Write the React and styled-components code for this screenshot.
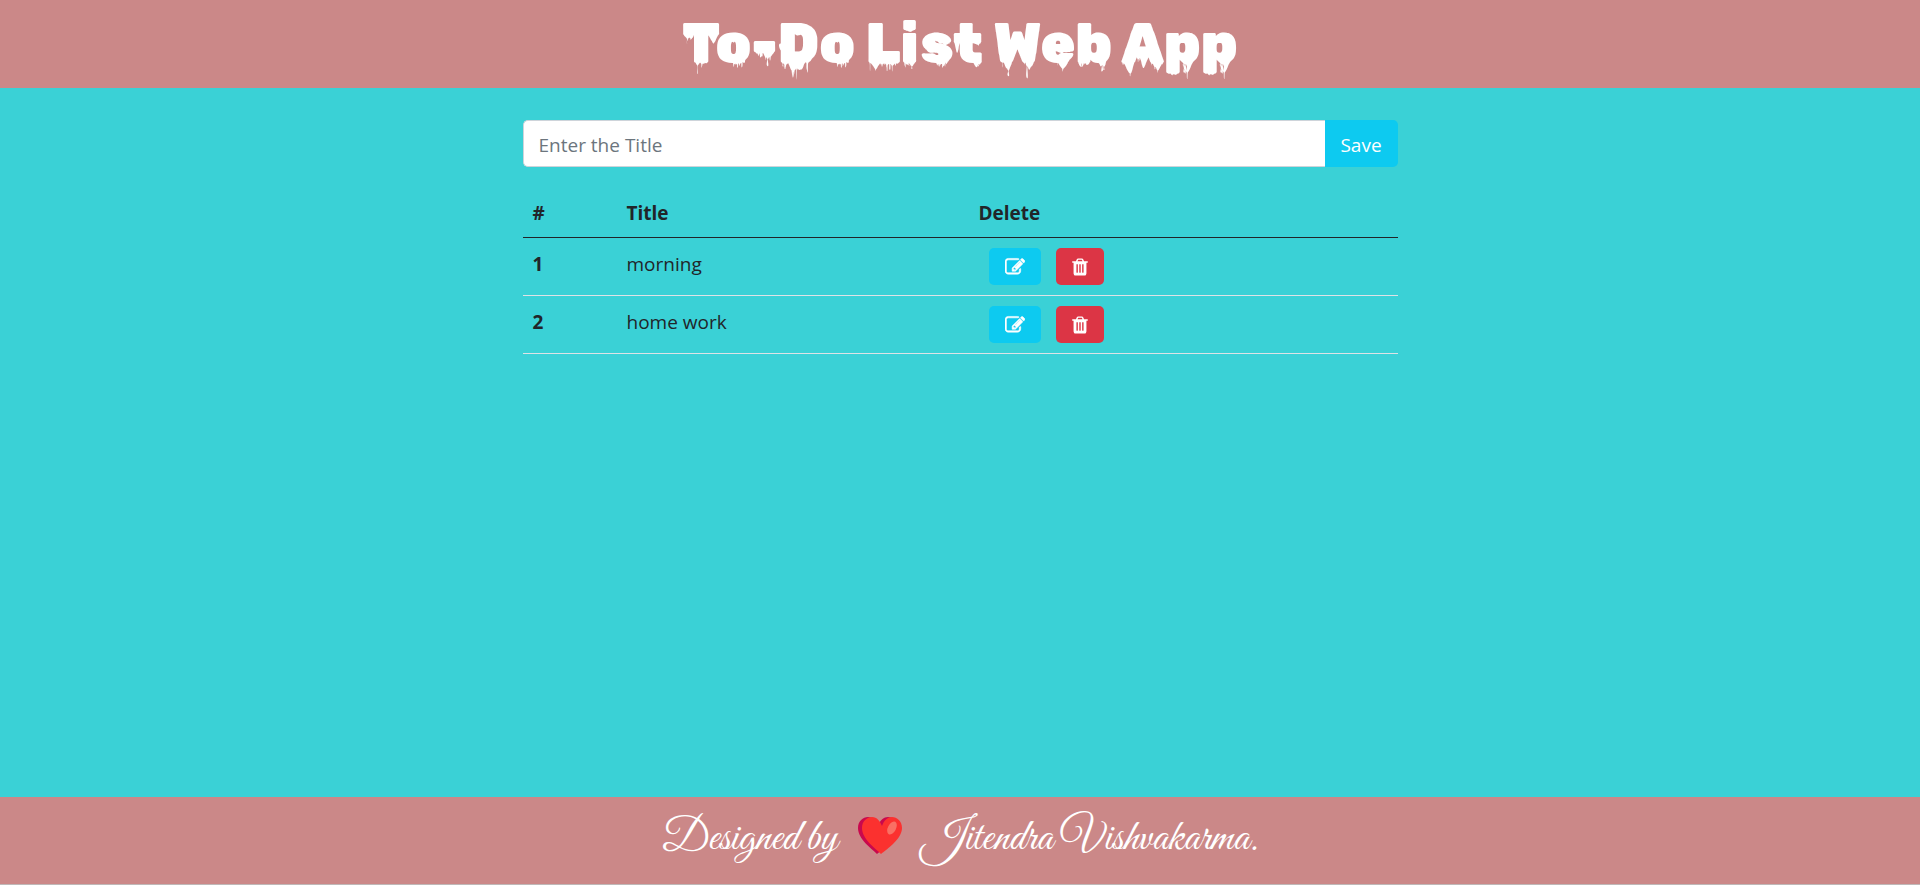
import React, { useState } from "react";
import styled, { createGlobalStyle } from "styled-components";

const GlobalStyle = createGlobalStyle`
  *, *::before, *::after { box-sizing: border-box; }
  body {
    margin: 0;
    background: #3ad1d6;
    color: #212529;
    font-family: "Segoe UI", "Open Sans", sans-serif;
    font-size: 19px;
    line-height: 32px;
  }
`;

const Page = styled.div`
  min-height: 100vh;
  display: flex;
  flex-direction: column;
`;

const Header = styled.header`
  height: 88px;
  display: flex;
  align-items: center;
  justify-content: center;
  background: #cb8888;
`;

const Title = styled.h1`
  margin: 0;
  color: #fff;
  font-family: "Rubik Wet Paint", Inter, sans-serif;
  font-weight: 500;
  font-size: 56px;
  line-height: 88px;
  white-space: nowrap;
`;

const Main = styled.main`
  flex: 1;
  width: 100%;
  max-width: 875px;
  margin: 0 auto;
  padding-top: 32px;
`;

const InputGroup = styled.form`
  display: flex;
  height: 47px;
  margin-bottom: 20px;
`;

const TitleInput = styled.input`
  flex: 1;
  min-width: 0;
  padding: 2px 15px 0;
  border: 1px solid #ced4da;
  border-right: 0;
  border-radius: 5px 0 0 5px;
  background: #fff;
  color: #212529;
  font: inherit;
  &::placeholder { color: #6c757d; opacity: 1; }
`;

const SaveButton = styled.button`
  width: 73px;
  padding: 2px 0 0;
  border: 0;
  border-radius: 0 5px 5px 0;
  background: #0dcaf0;
  color: #fff;
  font: inherit;
  cursor: pointer;
`;

const Table = styled.table`
  width: 100%;
  border-collapse: collapse;
  table-layout: fixed;
  th, td {
    padding: 10px 10px 8px;
    text-align: left;
    vertical-align: top;
    border-bottom: 1px solid #dee2e6;
  }
  th { font-weight: 700; }
  thead th { border-bottom-color: #212529; }
`;

const Column = styled.col`
  width: ${(p) => p.$width};
`;

const Actions = styled.div`
  display: flex;
  gap: 15px;
  padding: 0 0 2px 10px;
`;

const IconButton = styled.button`
  display: flex;
  align-items: center;
  height: 37px;
  padding: 0 16px;
  border: 0;
  border-radius: 5px;
  background: ${(p) => (p.$danger ? "#dc3545" : "#0dcaf0")};
  color: #fff;
  cursor: pointer;
  svg { display: block; height: 20px; fill: currentColor; }
`;

const Footer = styled.footer`
  height: 88px;
  display: flex;
  align-items: center;
  justify-content: center;
  gap: 20px;
  padding-bottom: 2px;
  background: #cb8888;
  border-bottom: 1px solid #c0b8b8;
  color: #fff;
  font-family: "Great Vibes", "Liberation Serif", serif;
  font-size: 44px;
  line-height: 48px;
  white-space: nowrap;
`;

const Heart = styled.svg`
  width: 44px;
  height: 39px;
  margin-bottom: 8px;
`;

const EditIcon = () => (
  <svg viewBox="0 0 1792 1792" width="20" stroke="currentColor" strokeWidth="50" aria-hidden="true">
    <path d="M888 1184l116-116-152-152-116 116v56h96v96h56zm440-720q-16-16-33 1l-350 350q-17 17-1 33t33-1l350-350q17-17 1-33zm80 594v190q0 119-84.5 203.5t-203.5 84.5h-832q-119 0-203.5-84.5t-84.5-203.5v-832q0-119 84.5-203.5t203.5-84.5h832q63 0 117 25 15 7 18 23 3 17-9 29l-49 49q-14 14-32 8-23-6-45-6h-832q-66 0-113 47t-47 113v832q0 66 47 113t113 47h832q66 0 113-47t47-113v-126q0-13 9-22l64-64q15-15 35-7t20 29zm-96-738l288 288-672 672h-288v-288zm444 132l-92 92-288-288 92-92q28-28 68-28t68 28l152 152q28 28 28 68t-28 68z" />
  </svg>
);

const TrashIcon = () => (
  <svg viewBox="192 0 1408 1792" width="16" aria-hidden="true">
    <path d="M704 1376v-704q0-14-9-23t-23-9h-64q-14 0-23 9t-9 23v704q0 14 9 23t23 9h64q14 0 23-9t9-23zm256 0v-704q0-14-9-23t-23-9h-64q-14 0-23 9t-9 23v704q0 14 9 23t23 9h64q14 0 23-9t9-23zm256 0v-704q0-14-9-23t-23-9h-64q-14 0-23 9t-9 23v704q0 14 9 23t23 9h64q14 0 23-9t9-23zm-544-992h448l-48-117q-7-9-17-11h-317q-10 2-17 11zm928 32v64q0 14-9 23t-23 9h-96v948q0 83-47 143.5t-113 60.5h-832q-66 0-113-58.5t-47-141.5v-952h-96q-14 0-23-9t-9-23v-64q0-14 9-23t23-9h309l70-167q15-37 54-63t79-26h320q40 0 79 26t54 63l70 167h309q14 0 23 9t9 23z" />
  </svg>
);

const heart = "M23 38C17 32 4 23 4 12 4 5 9 1 14 1c5 0 8 4 10 9 2-6 6-9 10-9 5 0 10 4 10 11 0 11-15 21-21 26z";

const HeartIcon = () => (
  <Heart viewBox="0 0 44 39" aria-label="love" role="img">
    <path fill="#c9084d" d={heart} transform="translate(-4 0)" />
    <path fill="#fb312f" d={heart} />
    <ellipse cx="34" cy="12" rx="4" ry="7" fill="#f97064" transform="rotate(28 34 12)" />
  </Heart>
);

export default function App() {
  const [tasks, setTasks] = useState(["morning", "home work"]);
  const [draft, setDraft] = useState("");

  const save = (e) => {
    e.preventDefault();
    if (!draft.trim()) return;
    setTasks([...tasks, draft.trim()]);
    setDraft("");
  };
  const remove = (index) => setTasks(tasks.filter((_, i) => i !== index));
  const edit = (index) => {
    setDraft(tasks[index]);
    remove(index);
  };

  return (
    <>
      <GlobalStyle />
      <Page>
        <Header>
          <Title>To-Do List Web App</Title>
        </Header>
        <Main>
          <InputGroup onSubmit={save}>
            <TitleInput
              aria-label="Title"
              placeholder="Enter the Title"
              value={draft}
              onChange={(e) => setDraft(e.target.value)}
            />
            <SaveButton type="submit">Save</SaveButton>
          </InputGroup>
          <Table>
            <colgroup>
              <Column $width="94px" />
              <Column $width="352px" />
              <Column $width="auto" />
            </colgroup>
            <thead>
              <tr>
                <th scope="col">#</th>
                <th scope="col">Title</th>
                <th scope="col">Delete</th>
              </tr>
            </thead>
            <tbody>
              {tasks.map((task, i) => (
                <tr key={i}>
                  <th scope="row">{i + 1}</th>
                  <td>{task}</td>
                  <td>
                    <Actions>
                      <IconButton type="button" aria-label={`Edit ${task}`} onClick={() => edit(i)}>
                        <EditIcon />
                      </IconButton>
                      <IconButton type="button" $danger aria-label={`Delete ${task}`} onClick={() => remove(i)}>
                        <TrashIcon />
                      </IconButton>
                    </Actions>
                  </td>
                </tr>
              ))}
            </tbody>
          </Table>
        </Main>
        <Footer>
          <span>Designed by</span>
          <HeartIcon />
          <span>Jitendra Vishvakarma.</span>
        </Footer>
      </Page>
    </>
  );
}
